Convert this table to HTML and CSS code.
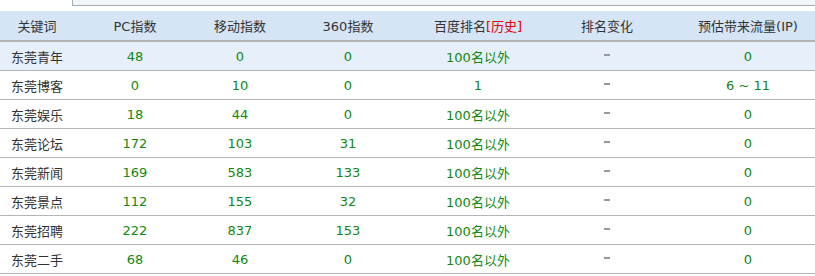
FILE: index.html
```html
<!DOCTYPE html>
<html lang="zh-CN">
<head>
<meta charset="utf-8">
<title>关键词排名</title>
<link rel="stylesheet" href="styles.css">
</head>
<body>
<div class="topbox"></div>
<table class="kw">
  <colgroup>
    <col class="c1"><col class="c2"><col class="c3"><col class="c4"><col class="c5"><col class="c6"><col class="c7">
  </colgroup>
  <thead>
    <tr>
      <th>关键词</th><th>PC指数</th><th>移动指数</th><th>360指数</th>
      <th>百度排名<span class="red">[历史]</span></th><th>排名变化</th><th>预估带来流量(IP)</th>
    </tr>
  </thead>
  <tbody>
    <tr class="hl"><td class="k">东莞青年</td><td>48</td><td>0</td><td>0</td><td>100名以外</td><td class="d"><span class="dash"></span></td><td>0</td></tr>
    <tr><td class="k">东莞博客</td><td>0</td><td>10</td><td>0</td><td>1</td><td class="d"><span class="dash"></span></td><td>6 ~ 11</td></tr>
    <tr><td class="k">东莞娱乐</td><td>18</td><td>44</td><td>0</td><td>100名以外</td><td class="d"><span class="dash"></span></td><td>0</td></tr>
    <tr><td class="k">东莞论坛</td><td>172</td><td>103</td><td>31</td><td>100名以外</td><td class="d"><span class="dash"></span></td><td>0</td></tr>
    <tr><td class="k">东莞新闻</td><td>169</td><td>583</td><td>133</td><td>100名以外</td><td class="d"><span class="dash"></span></td><td>0</td></tr>
    <tr><td class="k">东莞景点</td><td>112</td><td>155</td><td>32</td><td>100名以外</td><td class="d"><span class="dash"></span></td><td>0</td></tr>
    <tr><td class="k">东莞招聘</td><td>222</td><td>837</td><td>153</td><td>100名以外</td><td class="d"><span class="dash"></span></td><td>0</td></tr>
    <tr><td class="k">东莞二手</td><td>68</td><td>46</td><td>0</td><td>100名以外</td><td class="d"><span class="dash"></span></td><td>0</td></tr>
  </tbody>
</table>
</body>
</html>
```

FILE: styles.css
```css
html, body {
  margin: 0;
  padding: 0;
  background: #fff;
  overflow: hidden;
}
body {
  font-family: "DejaVu Sans", "Noto Sans CJK SC", sans-serif;
  font-size: 13px;
  color: #333;
}
.topbox {
  margin-left: 72px;
  height: 5px;
  background: #f0f5fa;
  border-left: 1px solid #aaa;
  border-bottom: 1px solid #aaa;
}
.kw {
  margin-top: 5px;
  width: 826px;
  table-layout: fixed;
  border-collapse: collapse;
}
.c1 { width: 74px; }
.c2 { width: 122px; }
.c3 { width: 88px; }
.c4 { width: 128px; }
.c5 { width: 132px; }
.c6 { width: 126px; }
.c7 { width: 156px; }
.kw th {
  height: 29px;
  padding: 0;
  background: #d5e5f6;
  font-weight: normal;
  color: #333;
  text-align: center;
  border-bottom: 2px solid #b4b4b4;
  white-space: nowrap;
}
.kw td {
  height: 28px;
  padding: 0;
  text-align: center;
  color: #118811;
  border-bottom: 1px solid #b4b4b4;
  white-space: nowrap;
}
.kw td.k { color: #333; }
.kw tr.hl td { background: #e7f0fa; }
.red { color: #e00000; }
.dash {
  display: inline-block;
  width: 6px;
  height: 2px;
  background: #999;
  vertical-align: middle;
  margin-bottom: 4px;
}
```
